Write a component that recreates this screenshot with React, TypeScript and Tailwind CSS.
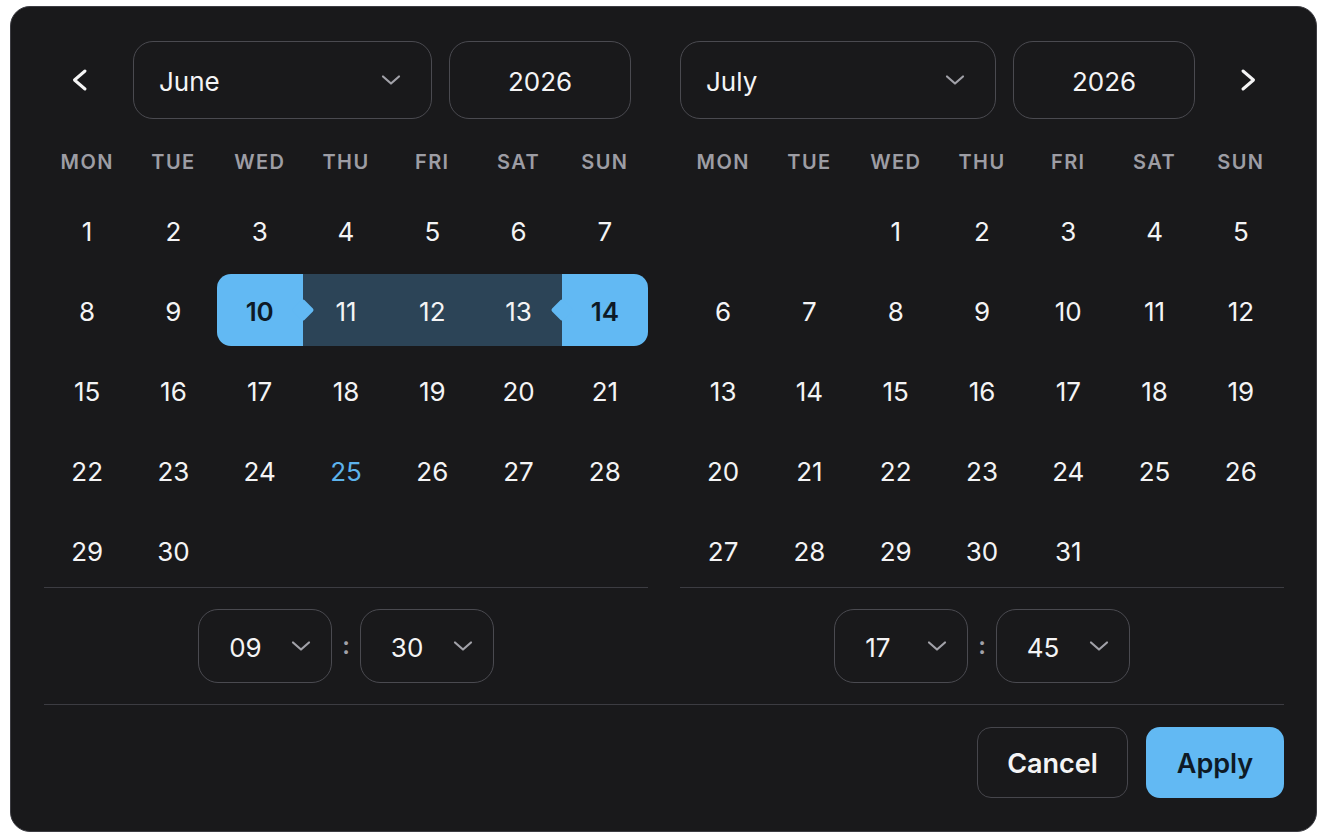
const FONT = "Inter, 'Noto Sans', 'Liberation Sans', sans-serif";
const DAYS = ["MON", "TUE", "WED", "THU", "FRI", "SAT", "SUN"];

function Chevron({ dir }: { dir: "left" | "right" }) {
  return (
    <svg width="18" height="24" viewBox="0 0 18 24" fill="none">
      <path
        d={dir === "left" ? "M14 3 L3.5 12 L14 21" : "M4 3 L14.5 12 L4 21"}
        stroke="#f4f4f5"
        strokeWidth="3"
        strokeLinecap="round"
        strokeLinejoin="round"
      />
    </svg>
  );
}

function Caret() {
  return (
    <svg width="20" height="12" viewBox="0 0 20 12" fill="none">
      <path
        d="M2 2.5 L10 9.5 L18 2.5"
        stroke="#a1a1a8"
        strokeWidth="2.2"
        strokeLinecap="round"
        strokeLinejoin="round"
      />
    </svg>
  );
}

function Select({ label, center }: { label: string; center?: boolean }) {
  return (
    <div
      className={`h-[78px] rounded-[20px] border border-[#4a4a50] flex items-center text-[26px] text-[#f4f4f5] ${
        center ? "justify-center" : "justify-between pl-[25px] pr-[30px]"
      }`}
    >
      <span className="pt-[3px]">{label}</span>
      {!center && <Caret />}
    </div>
  );
}

function TimeSelect({ value }: { value: string }) {
  return (
    <div className="w-[134px] h-[74px] rounded-[20px] border border-[#4a4a50] flex items-center justify-between pl-[30px] pr-[20px] text-[26px] text-[#f4f4f5]">
      <span className="pt-[3px]">{value}</span>
      <Caret />
    </div>
  );
}

function DayCell({ day, start, end, inRange, today }: { day?: number; start?: boolean; end?: boolean; inRange?: boolean; today?: boolean }) {
  if (!day) return <div className="h-[72px]" />;
  let cls = "text-[#f4f4f5] font-normal";
  if (start || end) cls = "bg-[#62b9f3] text-[#0e1a26] font-semibold z-10";
  else if (inRange) cls = "bg-[#2c4457] text-[#f4f4f5]";
  if (today) cls = "text-[#5db3ec]";
  return (
    <div
      className={`relative h-[72px] flex items-center justify-center text-[26px] ${cls} ${start ? "rounded-l-[14px]" : ""} ${
        end ? "rounded-r-[14px]" : ""
      }`}
    >
      {start && <span className="absolute right-[-8px] top-1/2 -mt-[8px] w-[16px] h-[16px] rotate-45 bg-[#62b9f3] rounded-[2px]" />}
      {end && <span className="absolute left-[-8px] top-1/2 -mt-[8px] w-[16px] h-[16px] rotate-45 bg-[#62b9f3] rounded-[2px]" />}
      <span className="relative pt-[3px]">{day}</span>
    </div>
  );
}

function Month({ offset, count, range, today }: { offset: number; count: number; range?: [number, number]; today?: number }) {
  const cells: (number | undefined)[] = [];
  for (let i = 0; i < offset; i++) cells.push(undefined);
  for (let d = 1; d <= count; d++) cells.push(d);
  return (
    <>
      <div className="grid grid-cols-7 h-[40px] mt-[22px] items-center">
        {DAYS.map((d) => (
          <div key={d} className="text-center pt-[2px] text-[20px] font-semibold tracking-[0.07em] text-[#9d9da4]">
            {d}
          </div>
        ))}
      </div>
      <div className="grid grid-cols-7 gap-y-[8px] mt-[13px] pb-[1px]">
        {cells.map((d, i) => (
          <DayCell
            key={i}
            day={d}
            start={!!range && d === range[0]}
            end={!!range && d === range[1]}
            inRange={!!range && !!d && d > range[0] && d < range[1]}
            today={d === today}
          />
        ))}
      </div>
    </>
  );
}

export default function App() {
  return (
    <div className="min-h-screen bg-white pt-[6px] pl-[10px]" style={{ fontFamily: FONT }}>
      <div className="w-[1307px] h-[826px] rounded-[20px] border border-[#3c3c42] bg-[#19191b] pt-[34px] pl-[33px] pr-[32px] antialiased">
        <div className="grid grid-cols-2 gap-[32px]">
          {/* June */}
          <div>
            <div className="flex gap-[17px]">
              <button className="w-[72px] h-[78px] flex items-center justify-center">
                <Chevron dir="left" />
              </button>
              <div className="flex-1">
                <Select label="June" />
              </div>
              <div className="w-[182px]">
                <Select label="2026" center />
              </div>
              <div className="w-0" />
            </div>
            <Month offset={0} count={30} range={[10, 14]} today={25} />
            <div className="border-t border-[#3c3c42] pt-[21px] pb-[21px] flex items-center justify-center gap-[10px]">
              <TimeSelect value="09" />
              <span className="text-[#a1a1a8] text-[24px] font-semibold">:</span>
              <TimeSelect value="30" />
            </div>
          </div>

          {/* July */}
          <div>
            <div className="flex gap-[17px]">
              <div className="flex-1">
                <Select label="July" />
              </div>
              <div className="w-[182px]">
                <Select label="2026" center />
              </div>
              <button className="w-[72px] h-[78px] flex items-center justify-center">
                <Chevron dir="right" />
              </button>
            </div>
            <Month offset={2} count={31} />
            <div className="border-t border-[#3c3c42] pt-[21px] pb-[21px] flex items-center justify-center gap-[10px]">
              <TimeSelect value="17" />
              <span className="text-[#a1a1a8] text-[24px] font-semibold">:</span>
              <TimeSelect value="45" />
            </div>
          </div>
        </div>

        <div className="border-t border-[#3c3c42] pt-[22px] flex justify-end gap-[18px]">
          <button className="w-[151px] h-[71px] rounded-[14px] border border-[#46464c] text-[27px] font-semibold text-[#f4f4f5]">
            <span className="inline-block pt-[3px]">Cancel</span>
          </button>
          <button className="w-[138px] h-[71px] rounded-[14px] bg-[#62b9f3] text-[27px] font-semibold text-[#0e1a26]">
            <span className="inline-block pt-[3px]">Apply</span>
          </button>
        </div>
      </div>
    </div>
  );
}
